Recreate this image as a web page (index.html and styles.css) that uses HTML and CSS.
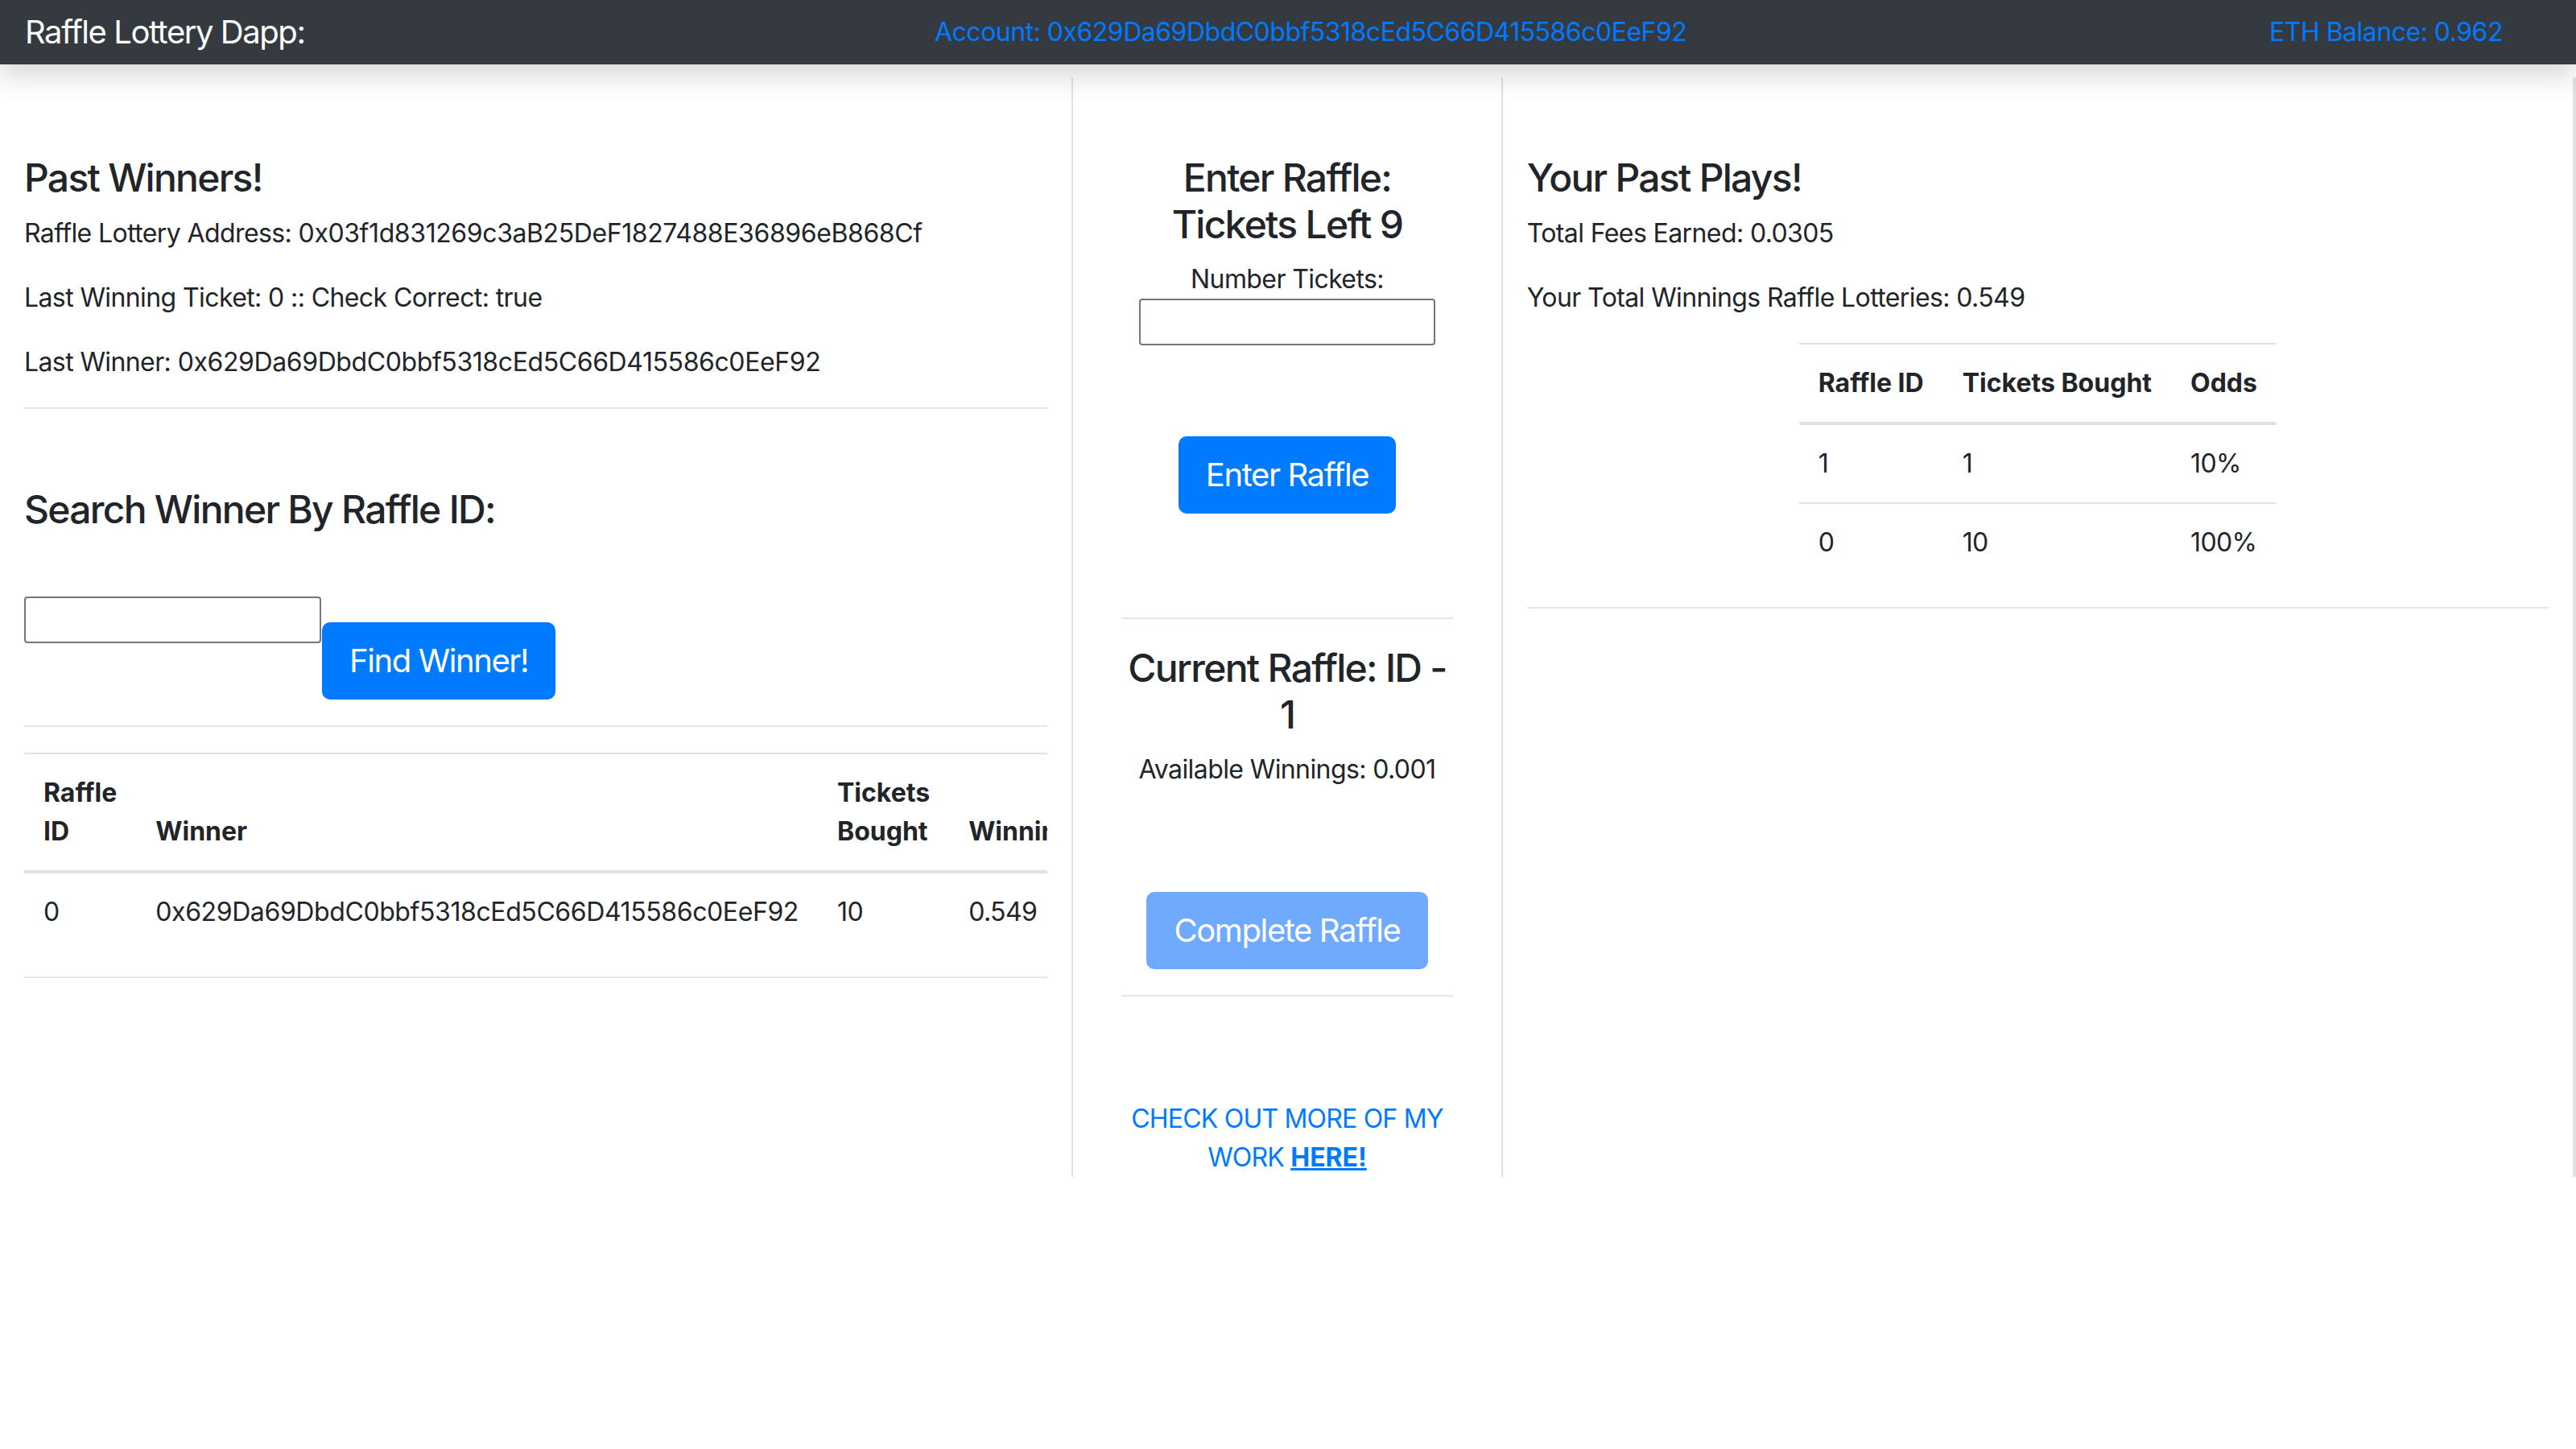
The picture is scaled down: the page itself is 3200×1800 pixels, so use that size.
FILE: index.html
```html
<!DOCTYPE html>
<html lang="en">
<head>
<meta charset="utf-8">
<title>Raffle Lottery Dapp</title>
<link rel="stylesheet" href="styles.css">
</head>
<body>
<nav class="topbar">
  <span class="brand">Raffle Lottery Dapp:</span>
  <span class="nav-info">Account: 0x629Da69DbdC0bbf5318cEd5C66D415586c0EeF92</span>
  <span class="nav-info">ETH Balance: 0.962</span>
</nav>
<main class="board">
  <section class="col col-wide">
    <h4 class="spaced">Past Winners!</h4>
    <p>Raffle Lottery Address: <span class="addr">0x03f1d831269c3aB25DeF1827488E36896eB868Cf</span></p>
    <p>Last Winning Ticket: 0 :: Check Correct: true</p>
    <p>Last Winner: <span class="addr">0x629Da69DbdC0bbf5318cEd5C66D415586c0EeF92</span></p>
    <hr>
    <h4 class="spaced">Search Winner By Raffle ID:</h4>
    <div class="search-row">
      <input class="field" type="text">
      <button class="btn btn-find" type="button">Find Winner!</button>
    </div>
    <hr>
    <div class="table-clip">
      <table class="data full">
        <thead>
          <tr><th>Raffle ID</th><th>Winner</th><th>Tickets Bought</th><th>Winnings</th></tr>
        </thead>
        <tbody>
          <tr><td>0</td><td class="addr">0x629Da69DbdC0bbf5318cEd5C66D415586c0EeF92</td><td>10</td><td>0.549</td></tr>
        </tbody>
      </table>
    </div>
    <hr>
  </section>
  <section class="col col-narrow">
    <div class="mid">
      <h4 class="spaced">Enter Raffle:<br>Tickets Left 9</h4>
      <label class="label" for="tickets">Number Tickets:</label>
      <input class="field field-mid" id="tickets" type="text">
      <div class="actions enter-actions">
        <button class="btn" type="button">Enter Raffle</button>
      </div>
      <hr>
      <h4>Current Raffle: ID -<br>1</h4>
      <p>Available Winnings: 0.001</p>
      <div class="actions complete-actions">
        <button class="btn btn-muted" type="button">Complete Raffle</button>
      </div>
      <hr>
      <div class="promo">CHECK OUT MORE OF MY<br>WORK <a href="#">HERE!</a></div>
    </div>
  </section>
  <section class="col col-wide col-last">
    <h4 class="spaced">Your Past Plays!</h4>
    <p>Total Fees Earned: 0.0305</p>
    <p>Your Total Winnings Raffle Lotteries: 0.549</p>
    <table class="data centered">
      <thead>
        <tr><th>Raffle ID</th><th>Tickets Bought</th><th>Odds</th></tr>
      </thead>
      <tbody>
        <tr><td>1</td><td>1</td><td>10%</td></tr>
        <tr><td>0</td><td>10</td><td>100%</td></tr>
      </tbody>
    </table>
    <hr>
  </section>
</main>
</body>
</html>
```
FILE: styles.css
```css
html {
  font-size: 32px;
}

body {
  margin: 0;
  font-family: Inter, "Helvetica Neue", Arial, sans-serif;
  font-size: 32px;
  line-height: 1.5;
  letter-spacing: -0.6px;
  color: #212529;
  background: #fff;
}

.topbar {
  position: relative;
  height: 80px;
  box-sizing: border-box;
  padding-left: 31px;
  background: #343a40;
  box-shadow: 0 16px 32px rgba(0, 0, 0, 0.15);
  display: grid;
  grid-template-columns: 1130px 1658px 1fr;
  align-items: center;
}

.brand {
  color: #fff;
  font-size: 40px;
  line-height: 60px;
  letter-spacing: -0.036em;
  white-space: nowrap;
}

.nav-info {
  color: #007bff;
  font-size: 32px;
  line-height: 48px;
  letter-spacing: -0.5px;
  white-space: nowrap;
}

.board {
  display: flex;
  margin-top: 16px;
}

.col {
  box-sizing: border-box;
  padding: 0 30px;
  border-right: 2px solid #dee2e6;
  min-width: 0;
}

.col-wide {
  flex: 0 0 41.6667%;
}

.col-narrow {
  flex: 0 0 16.6667%;
}

.col-last {
  border-right-width: 4px;
}

h4 {
  font-size: 48px;
  font-weight: 500;
  line-height: 1.2;
  letter-spacing: -0.036em;
  margin: 0 0 16px;
}

.spaced {
  margin-top: 96px;
}

p {
  margin: 0 0 32px;
}

.addr {
  letter-spacing: -0.4px;
}

hr {
  height: 0;
  border: 0;
  border-top: 2px solid rgba(0, 0, 0, 0.1);
  margin: 32px 0;
}

.search-row {
  display: flex;
  align-items: flex-start;
  margin-top: 80px;
}

.field {
  box-sizing: border-box;
  width: 369px;
  height: 58px;
  margin: 0;
  padding: 2px 4px;
  border: 2px solid #767676;
  border-radius: 4px;
  font: inherit;
  background: #fff;
}

.btn {
  font-family: inherit;
  font-size: 40px;
  line-height: 60px;
  letter-spacing: -0.035em;
  padding: 16px 32px;
  border: 2px solid #007bff;
  border-radius: 10px;
  background: #007bff;
  color: #fff;
  cursor: pointer;
}

.btn-find {
  margin-top: 32px;
  margin-left: 1px;
}

.btn-muted {
  background: #70aaff;
  border-color: #70aaff;
}

.table-clip {
  overflow: hidden;
  margin-bottom: 32px;
}

.data {
  border-collapse: collapse;
}

.data.full {
  width: 100%;
}

.data.centered {
  margin: 0 auto 32px;
}

.data th,
.data td {
  padding: 24px;
  text-align: left;
  vertical-align: top;
  line-height: 48px;
  border-top: 2px solid #dee2e6;
}

.data thead th {
  vertical-align: bottom;
  font-weight: 700;
  letter-spacing: 0;
  border-bottom: 4px solid #dee2e6;
}

.mid {
  padding: 0 30px;
  text-align: center;
}

.label {
  display: block;
}

.field-mid {
  display: block;
  width: 368px;
  margin: 0 auto;
}

.actions {
  display: flex;
  justify-content: center;
}

.enter-actions {
  margin: 113px 0 129px;
}

.complete-actions {
  margin: 128px 0 32px;
}

.promo {
  margin-top: 128px;
  color: #007bff;
  letter-spacing: -0.8px;
}

.promo a {
  color: #007bff;
  font-weight: 700;
  letter-spacing: 0;
  text-decoration: underline;
}
```
